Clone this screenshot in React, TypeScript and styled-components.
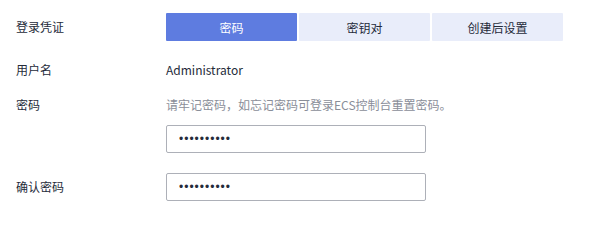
import React from "react";
import styled, { createGlobalStyle } from "styled-components";

const Global = createGlobalStyle`
  html, body { margin: 0; padding: 0; background: #ffffff; }
  body {
    font-family: "Noto Sans CJK SC", "Noto Sans", sans-serif;
    font-size: 12px;
    color: #252b3a;
  }
`;

const Form = styled.div`
  display: flex;
  flex-direction: column;
  padding-left: 16px;
  width: 609px;
  box-sizing: border-box;
`;

const Row = styled.div<{ $mt: number; $top?: boolean }>`
  display: grid;
  grid-template-columns: 150px 1fr;
  align-items: ${(p) => (p.$top ? "start" : "center")};
  margin-top: ${(p) => p.$mt}px;
  min-height: 28px;
`;

const Label = styled.div`
  font-size: 12px;
  line-height: 20px;
  color: #252b3a;
`;

const Tabs = styled.div`
  display: flex;
  gap: 2px;
`;

const Tab = styled.div<{ $active?: boolean }>`
  width: 131px;
  height: 28px;
  display: flex;
  align-items: center;
  justify-content: center;
  font-size: 12px;
  background: ${(p) => (p.$active ? "#5e7ce0" : "#e9edfa")};
  color: ${(p) => (p.$active ? "#ffffff" : "#252b3a")};
  border-radius: 1px;
`;

const Value = styled.div`
  font-size: 12px;
  line-height: 20px;
  color: #252b3a;
`;

const Field = styled.div`
  display: flex;
  flex-direction: column;
`;

const Hint = styled.div`
  font-size: 12px;
  line-height: 20px;
  color: #8a8e99;
`;

const Input = styled.input<{ $mt?: number }>`
  width: 260px;
  height: 28px;
  box-sizing: border-box;
  margin-top: ${(p) => p.$mt ?? 0}px;
  padding: 0 12px;
  border: 1px solid #adb0b8;
  border-radius: 2px;
  font-family: "Liberation Sans", sans-serif;
  font-size: 12px;
  letter-spacing: 1px;
  color: #252b3a;
  outline: none;
  background: #fff;
`;

export default function App() {
  return (
    <>
      <Global />
      <Form>
        <Row $mt={13}>
          <Label>登录凭证</Label>
          <Tabs>
            <Tab $active>密码</Tab>
            <Tab>密钥对</Tab>
            <Tab>创建后设置</Tab>
          </Tabs>
        </Row>
        <Row $mt={15}>
          <Label>用户名</Label>
          <Value>Administrator</Value>
        </Row>
        <Row $mt={11} $top>
          <Label>密码</Label>
          <Field>
            <Hint>请牢记密码，如忘记密码可登录ECS控制台重置密码。</Hint>
            <Input type="password" readOnly value="1234567890" $mt={10} />
          </Field>
        </Row>
        <Row $mt={20}>
          <Label>确认密码</Label>
          <Input type="password" readOnly value="1234567890" />
        </Row>
      </Form>
    </>
  );
}
